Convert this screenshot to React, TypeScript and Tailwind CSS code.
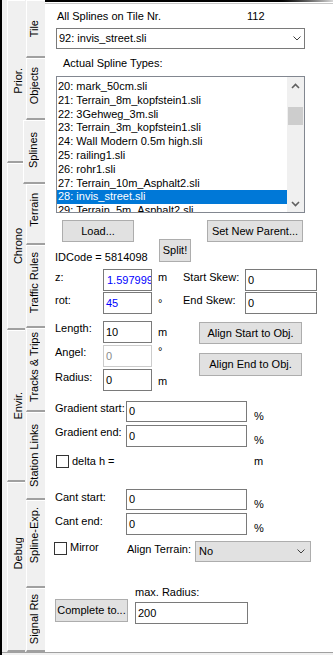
import React from "react";

const Chevron = () => (
  <svg width="8" height="5" viewBox="0 0 8 5">
    <path d="M0.5 0.5 L4 4 L7.5 0.5" stroke="#404040" strokeWidth="1" fill="none" />
  </svg>
);

const ScrollUp = () => (
  <svg width="9" height="6" viewBox="0 0 9 6">
    <path d="M1 5 L4.5 1.5 L8 5" stroke="#606060" strokeWidth="1.6" fill="none" />
  </svg>
);
const ScrollDown = () => (
  <svg width="9" height="6" viewBox="0 0 9 6">
    <path d="M1 1 L4.5 4.5 L8 1" stroke="#606060" strokeWidth="1.6" fill="none" />
  </svg>
);

const VText = ({ children }: { children: React.ReactNode }) => (
  <span className="[writing-mode:vertical-rl] rotate-180 whitespace-nowrap leading-[13px]">{children}</span>
);

const items = [
  "20: mark_50cm.sli",
  "21: Terrain_8m_kopfstein1.sli",
  "22: 3Gehweg_3m.sli",
  "23: Terrain_3m_kopfstein1.sli",
  "24: Wall Modern 0.5m high.sli",
  "25: railing1.sli",
  "26: rohr1.sli",
  "27: Terrain_10m_Asphalt2.sli",
  "28: invis_street.sli",
  "29: Terrain_5m_Asphalt2.sli",
];

const Btn = ({ children, className }: { children: React.ReactNode; className: string }) => (
  <div className={"shrink-0 bg-[#e1e1e1] border border-[#adadad] flex items-center justify-center whitespace-nowrap " + className}>
    {children}
  </div>
);

const Field = ({ children, className }: { children?: React.ReactNode; className: string }) => (
  <div className={"shrink-0 bg-white border flex items-center pl-[2px] overflow-hidden whitespace-nowrap " + className}>
    {children}
  </div>
);

const outerTab =
  "ml-[5px] w-[18px] bg-[#f0f0f0] border-l border-t border-b-2 border-l-white border-t-white border-b-[#a0a0a0] flex items-center justify-center pl-[4px]";
const innerTab =
  "ml-[1px] w-[19px] bg-[#f0f0f0] border-l border-t border-b-2 border-l-white border-t-white border-b-[#a0a0a0] flex items-center justify-center pr-[3px]";

export default function App() {
  return (
    <div className="flex w-[333px] h-[655px] overflow-hidden bg-[#f0f0f0] font-['Liberation_Sans',Arial,sans-serif] text-[11px] text-black leading-[13px]">
      <div className="w-[2px] shrink-0 bg-black" />
      <div className="flex flex-col w-[331px] shrink-0">
        <div className="flex h-[652px] shrink-0">
          {/* outer tab row */}
          <div className="w-[23px] shrink-0 flex flex-col">
            <div className={outerTab + " h-[163px]"}><VText>Prior.</VText></div>
            <div className={outerTab + " h-[167px]"}><VText>Chrono</VText></div>
            <div className={outerTab + " h-[152px]"}><VText>Envir.</VText></div>
            <div className={outerTab + " h-[170px] pb-[26px]"}><VText>Debug</VText></div>
          </div>
          {/* inner tab row */}
          <div className="w-[20px] shrink-0 flex flex-col">
            <div className={innerTab + " h-[58px]"}><VText>Tile</VText></div>
            <div className={innerTab + " h-[62px] pb-[6px]"}><VText>Objects</VText></div>
            <div className="-ml-[2px] w-[22px] h-[64px] bg-[#f0f0f0] border-l border-t border-b-2 border-l-white border-t-white border-b-[#a0a0a0] flex items-center justify-center pr-[2px] pb-[3px]">
              <VText>Splines</VText>
            </div>
            <div className={innerTab + " h-[61px] pb-[8px]"}><VText>Terrain</VText></div>
            <div className={innerTab + " h-[83px] pb-[6px]"}><VText>Traffic Rules</VText></div>
            <div className={innerTab + " h-[84px] pb-[5px]"}><VText>Tracks &amp; Trips</VText></div>
            <div className={innerTab + " h-[88px]"}><VText>Station Links</VText></div>
            <div className={innerTab + " h-[88px] pb-[16px]"}><VText>Spline-Exp.</VText></div>
            <div className={innerTab + " h-[64px]"}><VText>Signal Rts</VText></div>
          </div>
          {/* panel */}
          <div className="w-[288px] shrink-0 bg-white flex flex-col">
            <div className="h-[2px] bg-linear-to-r from-black from-80% to-[#d8d8d8]" />
            <div className="h-[1px] bg-white" />
            <div className="h-[1px] bg-[#c8c8c8]" />
            <div className="flex flex-col pl-[10px]">
              <div className="mt-[6px] flex h-[13px]">
                <span className="ml-[2px] w-[190px]">All Splines on Tile Nr.</span>
                <span>112</span>
              </div>
              <div className="mt-[5px] ml-[1px] w-[249px] h-[21px] border border-[#7a7a7a] flex items-center justify-between pl-[2px] pr-[3px]">
                <span>92: invis_street.sli</span>
                <Chevron />
              </div>
              <div className="mt-[8px] ml-[8px] h-[13px]">Actual Spline Types:</div>
              <div className="mt-[6px] ml-[1px] w-[249px] h-[137px] border border-[#828790] flex">
                <div className="w-[230px] flex flex-col pt-[3px] overflow-hidden">
                  {items.map((t, i) => (
                    <div
                      key={t}
                      className={
                        "shrink-0 h-[13.8px] leading-[13.8px] pl-[1px] whitespace-nowrap " +
                        (i === 8 ? "bg-[#0078d7] text-white" : "")
                      }
                    >
                      {t}
                    </div>
                  ))}
                </div>
                <div className="w-[17px] bg-[#f0f0f0] flex flex-col">
                  <div className="h-[17px] flex items-center justify-center"><ScrollUp /></div>
                  <div className="mt-[13px] h-[18px] mx-[1px] bg-[#cdcdcd]" />
                  <div className="flex-1" />
                  <div className="h-[17px] flex items-center justify-center"><ScrollDown /></div>
                </div>
              </div>

              {/* buttons block */}
              <div className="mt-[7px] h-[42px] flex items-start">
                <div className="w-[104px] flex flex-col shrink-0">
                  <Btn className="ml-[7px] w-[72px] h-[22px]">Load...</Btn>
                  <div className="mt-[9px] h-[13px] whitespace-nowrap">IDCode = 5814098</div>
                </div>
                <Btn className="mt-[19px] w-[32px] h-[23px]">Split!</Btn>
                <Btn className="ml-[16px] w-[96px] h-[22px]">Set New Parent...</Btn>
              </div>

              {/* z */}
              <div className="mt-[7px] h-[22px] flex items-start">
                <div className="w-[48px] pt-[2px]">z:</div>
                <Field className="w-[49px] h-[22px] border-[#7a7a7a] text-[#0000ff] pl-[3px]">1.597999</Field>
                <div className="w-[31px] pl-[6px] pt-[2px]">m</div>
                <div className="w-[62px] pt-[2px] whitespace-nowrap">Start Skew:</div>
                <Field className="w-[72px] h-[22px] border-[#7a7a7a]">0</Field>
              </div>
              {/* rot */}
              <div className="mt-[1px] h-[22px] flex items-start">
                <div className="w-[48px] pt-[2px]">rot:</div>
                <Field className="w-[49px] h-[22px] border-[#7a7a7a] text-[#0000ff]">45</Field>
                <div className="w-[31px] pl-[6px] pt-[5px]">°</div>
                <div className="w-[62px] pt-[2px] whitespace-nowrap">End Skew:</div>
                <Field className="w-[72px] h-[22px] border-[#7a7a7a]">0</Field>
              </div>
              {/* Length */}
              <div className="mt-[7px] h-[22px] flex items-start">
                <div className="w-[48px] pt-[1px]">Length:</div>
                <Field className="w-[49px] h-[22px] border-[#7a7a7a]">10</Field>
                <div className="w-[47px] pl-[6px] pt-[5px]">m</div>
                <Btn className="mt-[1px] w-[103px] h-[22px]">Align Start to Obj.</Btn>
              </div>
              {/* Angel */}
              <div className="mt-[2px] h-[22px] flex items-start">
                <div className="w-[48px] pt-[1px]">Angel:</div>
                <Field className="w-[49px] h-[22px] border-[#cccccc] text-[#8a8a8a]">0</Field>
                <div className="w-[47px] pl-[6px] pt-0">°</div>
                <Btn className="mt-[8px] w-[103px] h-[23px]">Align End to Obj.</Btn>
              </div>
              {/* Radius */}
              <div className="mt-[2px] h-[22px] flex items-start">
                <div className="w-[48px] pt-[2px]">Radius:</div>
                <Field className="w-[49px] h-[22px] border-[#7a7a7a]">0</Field>
                <div className="pl-[6px] pt-[6px]">m</div>
              </div>

              {/* Gradient */}
              <div className="mt-[10px] h-[21px] flex items-start">
                <div className="w-[71px] pt-[1px] whitespace-nowrap">Gradient start:</div>
                <Field className="w-[121px] h-[21px] border-[#7a7a7a]">0</Field>
                <div className="pl-[7px] pt-[9px]">%</div>
              </div>
              <div className="mt-[3px] h-[22px] flex items-start">
                <div className="w-[71px] pt-[1px] whitespace-nowrap">Gradient end:</div>
                <Field className="w-[121px] h-[22px] border-[#7a7a7a]">0</Field>
                <div className="pl-[7px] pt-[9px]">%</div>
              </div>
              <div className="mt-[8px] h-[13px] flex items-start">
                <div className="ml-[1px] w-[13px] h-[13px] border border-[#333333] bg-white shrink-0" />
                <div className="ml-[3px] w-[182px] whitespace-nowrap">delta h =</div>
                <div>m</div>
              </div>

              {/* Cant */}
              <div className="mt-[21px] h-[21px] flex items-start">
                <div className="w-[71px] pt-[2px] whitespace-nowrap">Cant start:</div>
                <Field className="w-[121px] h-[21px] border-[#7a7a7a]">0</Field>
                <div className="pl-[7px] pt-[9px]">%</div>
              </div>
              <div className="mt-[3px] h-[22px] flex items-start">
                <div className="w-[71px] pt-[2px] whitespace-nowrap">Cant end:</div>
                <Field className="w-[121px] h-[22px] border-[#7a7a7a]">0</Field>
                <div className="pl-[7px] pt-[9px]">%</div>
              </div>

              {/* Mirror / Align terrain */}
              <div className="mt-[6px] h-[21px] flex items-start">
                <div className="-ml-[1px] mt-[1px] w-[13px] h-[13px] border border-[#333333] bg-white shrink-0" />
                <div className="ml-[3px] w-[57px]">Mirror</div>
                <div className="w-[68px] pt-[2px] whitespace-nowrap">Align Terrain:</div>
                <div className="w-[116px] h-[21px] bg-[#e1e1e1] border border-[#adadad] flex items-center justify-between pl-[3px] pr-[5px]">
                  <span>No</span>
                  <Chevron />
                </div>
              </div>

              <div className="mt-[24px] ml-[80px] h-[13px] whitespace-nowrap">max. Radius:</div>
              <div className="h-[23px] flex items-start">
                <Btn className="w-[73px] h-[23px]">Complete to...</Btn>
                <Field className="ml-[7px] mt-[3px] w-[113px] h-[22px] border-[#7a7a7a]">200</Field>
              </div>
            </div>
          </div>
        </div>
        <div className="h-[1px] bg-[#a0a0a0] shrink-0" />
        <div className="flex-1" />
      </div>
    </div>
  );
}
